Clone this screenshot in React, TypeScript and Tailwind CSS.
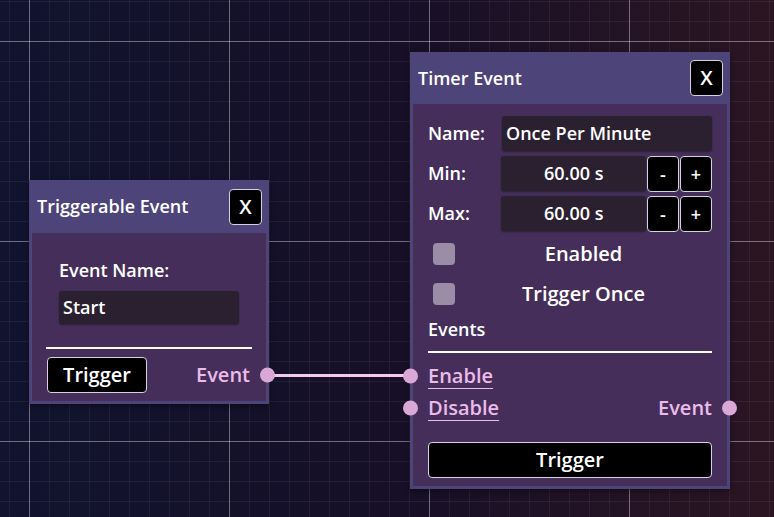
import React from 'react';

const minorX = Array.from({ length: 39 }, (_, i) => 9.5 + i * 20);
const minorY = Array.from({ length: 26 }, (_, i) => 1.5 + i * 20);
const majorX = [29.5, 229.5, 429.5, 629.5];
const majorY = [41.5, 241.5, 441.5];

const Grid = () => (
    <svg className="absolute inset-0" width={774} height={517}>
        {minorX.map((x) => (
            <line key={'mx' + x} x1={x} y1={0} x2={x} y2={517} stroke="rgba(255,255,255,0.06)" />
        ))}
        {minorY.map((y) => (
            <line key={'my' + y} x1={0} y1={y} x2={774} y2={y} stroke="rgba(255,255,255,0.06)" />
        ))}
        {majorX.map((x) => (
            <line key={'Mx' + x} x1={x} y1={0} x2={x} y2={517} stroke="rgba(255,255,255,0.35)" />
        ))}
        {majorY.map((y) => (
            <line key={'My' + y} x1={0} y1={y} x2={774} y2={y} stroke="rgba(255,255,255,0.35)" />
        ))}
        {/* connection */}
        <line x1={268} y1={375.5} x2={410} y2={375.5} stroke="#f2c9ef" strokeWidth={3} />
    </svg>
);

const Port = ({ side, offset }: { side: 'left' | 'right'; offset: string }) => (
    <span
        className={`absolute top-1/2 -translate-y-1/2 w-[15px] h-[15px] rounded-full bg-[#d9a8d6] ${side === 'left' ? 'left-0' : 'right-0'} ${offset}`}
    />
);

const CloseButton = () => (
    <button className="w-[33px] h-[36px] bg-black border border-[#d8d0e0] rounded-[4px] text-white text-[20px] leading-none flex items-center justify-center">
        X
    </button>
);

const TriggerableNode = () => (
    <div className="absolute left-[29px] top-[180px] w-[240px] bg-[#4d4479] shadow-[0_2px_6px_rgba(0,0,0,0.4)]">
        <div className="h-[53px] flex items-center justify-between pl-[8px] pr-[7px]">
            <span className="text-white text-[18px]">Triggerable Event</span>
            <CloseButton />
        </div>
        <div className="mx-[3px] mb-[3px] bg-[#452f5a] px-[14px] pt-[26px] pb-[8px]">
            <div className="pl-[13px] text-white text-[18px] leading-[22px]">Event Name:</div>
            <div className="ml-[13px] mt-[10px] w-[180px] h-[33px] bg-[#2a2030] rounded-[3px] shadow-[0_1px_2px_rgba(0,0,0,0.4)] flex items-center px-[4px] text-white text-[18px]">
                Start
            </div>
            <div className="mt-[23px] h-[2px] bg-white" />
            <div className="relative mt-[8px] flex items-center justify-between">
                <button className="ml-px w-[100px] h-[36px] bg-black border border-[#d8d0e0] rounded-[4px] text-white text-[20px]">
                    Trigger
                </button>
                <span className="text-[#ecbbe9] text-[20px] mr-[2px]">Event</span>
                <Port side="right" offset="-mr-[23px]" />
            </div>
        </div>
    </div>
);

const SmallBtn = ({ label }: { label: string }) => (
    <button className="w-[32px] h-[36px] bg-black border border-[#d8d0e0] rounded-[4px] text-white text-[18px] leading-none flex items-center justify-center">
        {label}
    </button>
);

const TimeRow = ({ label }: { label: string }) => (
    <div className="flex items-center h-[35px]">
        <span className="w-[74px] text-white text-[18px]">{label}</span>
        <div className="w-[146px] h-[35px] bg-[#2a2030] rounded-[3px] shadow-[0_1px_2px_rgba(0,0,0,0.4)] flex items-center justify-center text-white text-[18px]">
            60.00 s
        </div>
        <div className="flex gap-[1px] ml-[1px]">
            <SmallBtn label="-" />
            <SmallBtn label="+" />
        </div>
    </div>
);

const CheckRow = ({ label }: { label: string }) => (
    <div className="flex items-center h-[40px]">
        <span className="ml-[5px] w-[22px] h-[22px] rounded-[4px] bg-[#9b8da5]" />
        <span className="flex-1 text-center text-white text-[20px]">{label}</span>
    </div>
);

const TimerNode = () => (
    <div className="absolute left-[410px] top-[52px] w-[320px] bg-[#4d4479] shadow-[0_2px_6px_rgba(0,0,0,0.4)]">
        <div className="h-[52px] flex items-center justify-between pl-[8px] pr-[7px]">
            <span className="text-white text-[18px]">Timer Event</span>
            <CloseButton />
        </div>
        <div className="mx-[3px] mb-[3px] bg-[#452f5a] px-[15px] pt-[12px] pb-[8px]">
            <div className="flex flex-col gap-[5px]">
                <div className="flex items-center h-[35px]">
                    <span className="w-[74px] text-white text-[18px]">Name:</span>
                    <div className="flex-1 h-[35px] bg-[#2a2030] rounded-[3px] shadow-[0_1px_2px_rgba(0,0,0,0.4)] flex items-center px-[4px] text-white text-[18px]">
                        Once Per Minute
                    </div>
                </div>
                <TimeRow label="Min:" />
                <TimeRow label="Max:" />
            </div>
            <div className="mt-[3px]">
                <CheckRow label="Enabled" />
                <CheckRow label="Trigger Once" />
            </div>
            <div className="mt-[4px] text-white text-[18px] leading-[22px]">Events</div>
            <div className="mt-[11px] h-[2px] bg-white" />
            <div className="mt-[7px]">
                <div className="relative h-[32px] flex items-center">
                    <Port side="left" offset="-ml-[25px]" />
                    <span className="text-[#ecbbe9] text-[20px] underline underline-offset-[5px] decoration-1">Enable</span>
                </div>
                <div className="relative h-[32px] flex items-center justify-between">
                    <Port side="left" offset="-ml-[25px]" />
                    <span className="text-[#ecbbe9] text-[20px] underline underline-offset-[5px] decoration-1">Disable</span>
                    <span className="text-[#ecbbe9] text-[20px]">Event</span>
                    <Port side="right" offset="-mr-[25px]" />
                </div>
            </div>
            <button className="mt-[18px] w-full h-[36px] bg-black border border-[#d8d0e0] rounded-[4px] text-white text-[20px]">
                Trigger
            </button>
        </div>
    </div>
);

export default function App() {
    return (
        <div className="relative w-[774px] h-[517px] overflow-hidden bg-linear-to-r from-[#11142f] via-[#160f27] to-[#2b1522] font-['Open_Sans',sans-serif] font-semibold">
            <Grid />
            <TriggerableNode />
            <TimerNode />
        </div>
    );
}
